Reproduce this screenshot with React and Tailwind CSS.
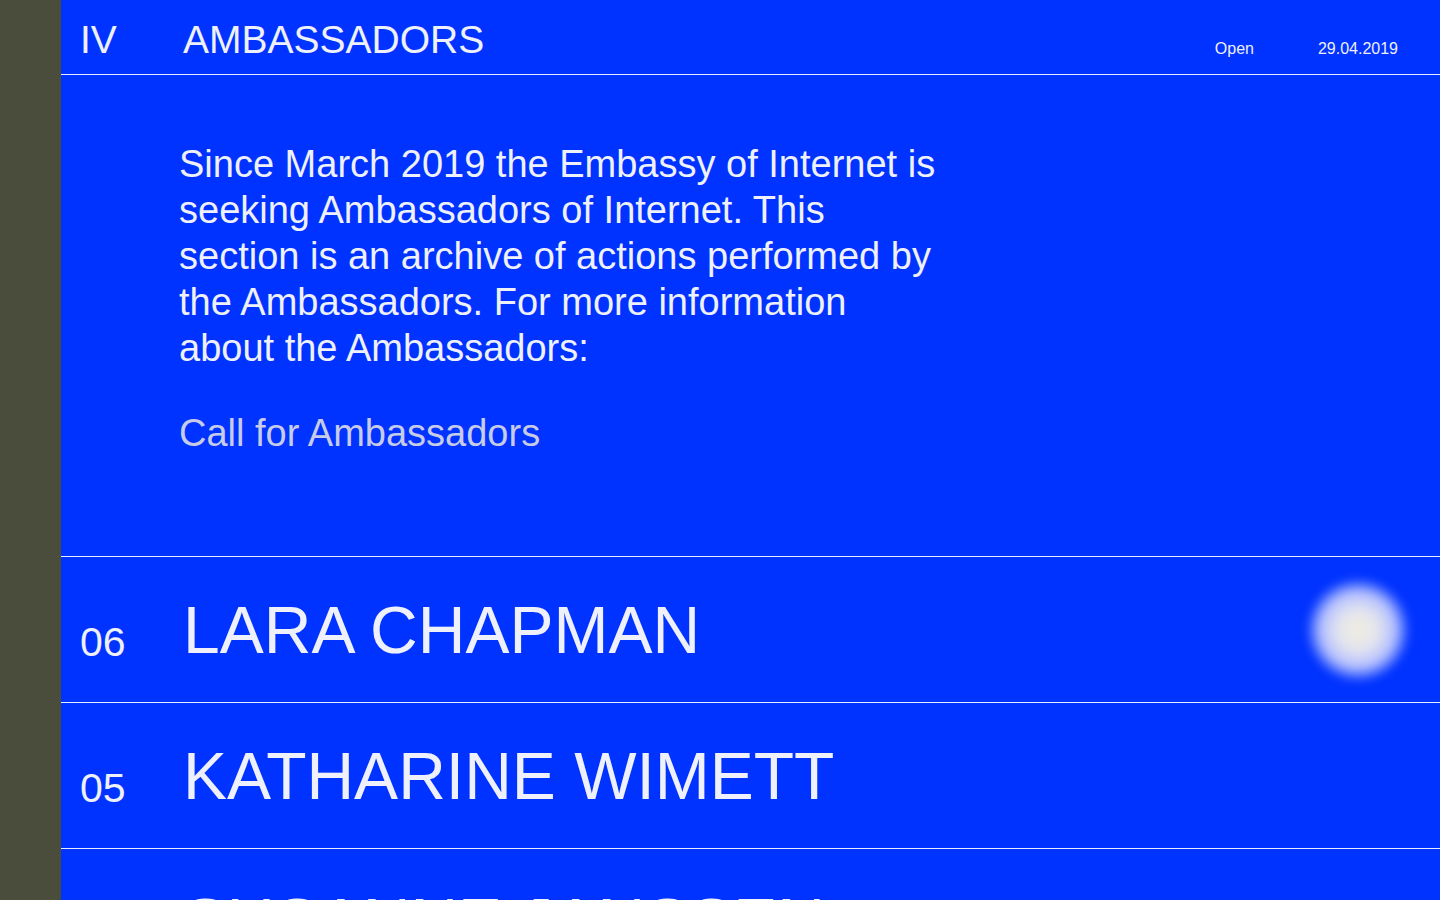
import React from "react";

const ambassadors = [
	{ no: "06", name: "LARA CHAPMAN", glow: true },
	{ no: "05", name: "KATHARINE WIMETT" },
	{ no: "04", name: "SUSANNE JANSSEN" },
];

export default function App() {
	return (
		<div className="flex h-screen w-full overflow-hidden bg-[#4a4d3c] font-['Liberation_Sans',Arial,sans-serif]">
			{/* Side strip */}
			<aside className="w-[61px] shrink-0" />

			<main className="flex-1 bg-[#0033ff] text-[#eef0fb]">
				{/* Header */}
				<header className="flex h-[75px] items-start border-b border-[#e8ecff] pl-[19px] pr-[42px]">
					<div className="flex pt-[20px] text-[39px] leading-none">
						<span className="w-[103px]">IV</span>
						<span>AMBASSADORS</span>
					</div>
					<div className="ml-auto flex gap-[64px] pt-[41px] text-[16px] leading-none">
						<span>Open</span>
						<span>29.04.2019</span>
					</div>
				</header>

				{/* Intro */}
				<section className="border-b border-[#e8ecff] pl-[118px] pt-[66px] pb-[100px]">
					<p className="w-[762px] text-[38px] leading-[46px]">
						Since March 2019 the Embassy of Internet is seeking Ambassadors of Internet. This
						section is an archive of actions performed by the Ambassadors. For more information
						about the Ambassadors:
					</p>
					<a href="#" className="mt-[39px] block text-[38px] leading-[46px] text-[#c6cbe8]">
						Call for Ambassadors
					</a>
				</section>

				{/* List */}
				{ambassadors.map((a) => (
					<div key={a.no} className="flex h-[146px] items-center border-b border-[#e8ecff] pl-[19px] pr-[30px]">
						<div className="flex items-baseline">
							<span className="w-[103px] translate-y-[3px] text-[41px] leading-none">{a.no}</span>
							<span className="text-[66px] leading-none">{a.name}</span>
						</div>
						{a.glow && (
							<div className="ml-auto h-[104px] w-[104px] rounded-full bg-[radial-gradient(circle,#efeddf_0%,#e4e5ee_26%,#b4c0ff_50%,rgba(0,51,255,0)_72%)] blur-[4px]" />
						)}
					</div>
				))}
			</main>
		</div>
	);
}
